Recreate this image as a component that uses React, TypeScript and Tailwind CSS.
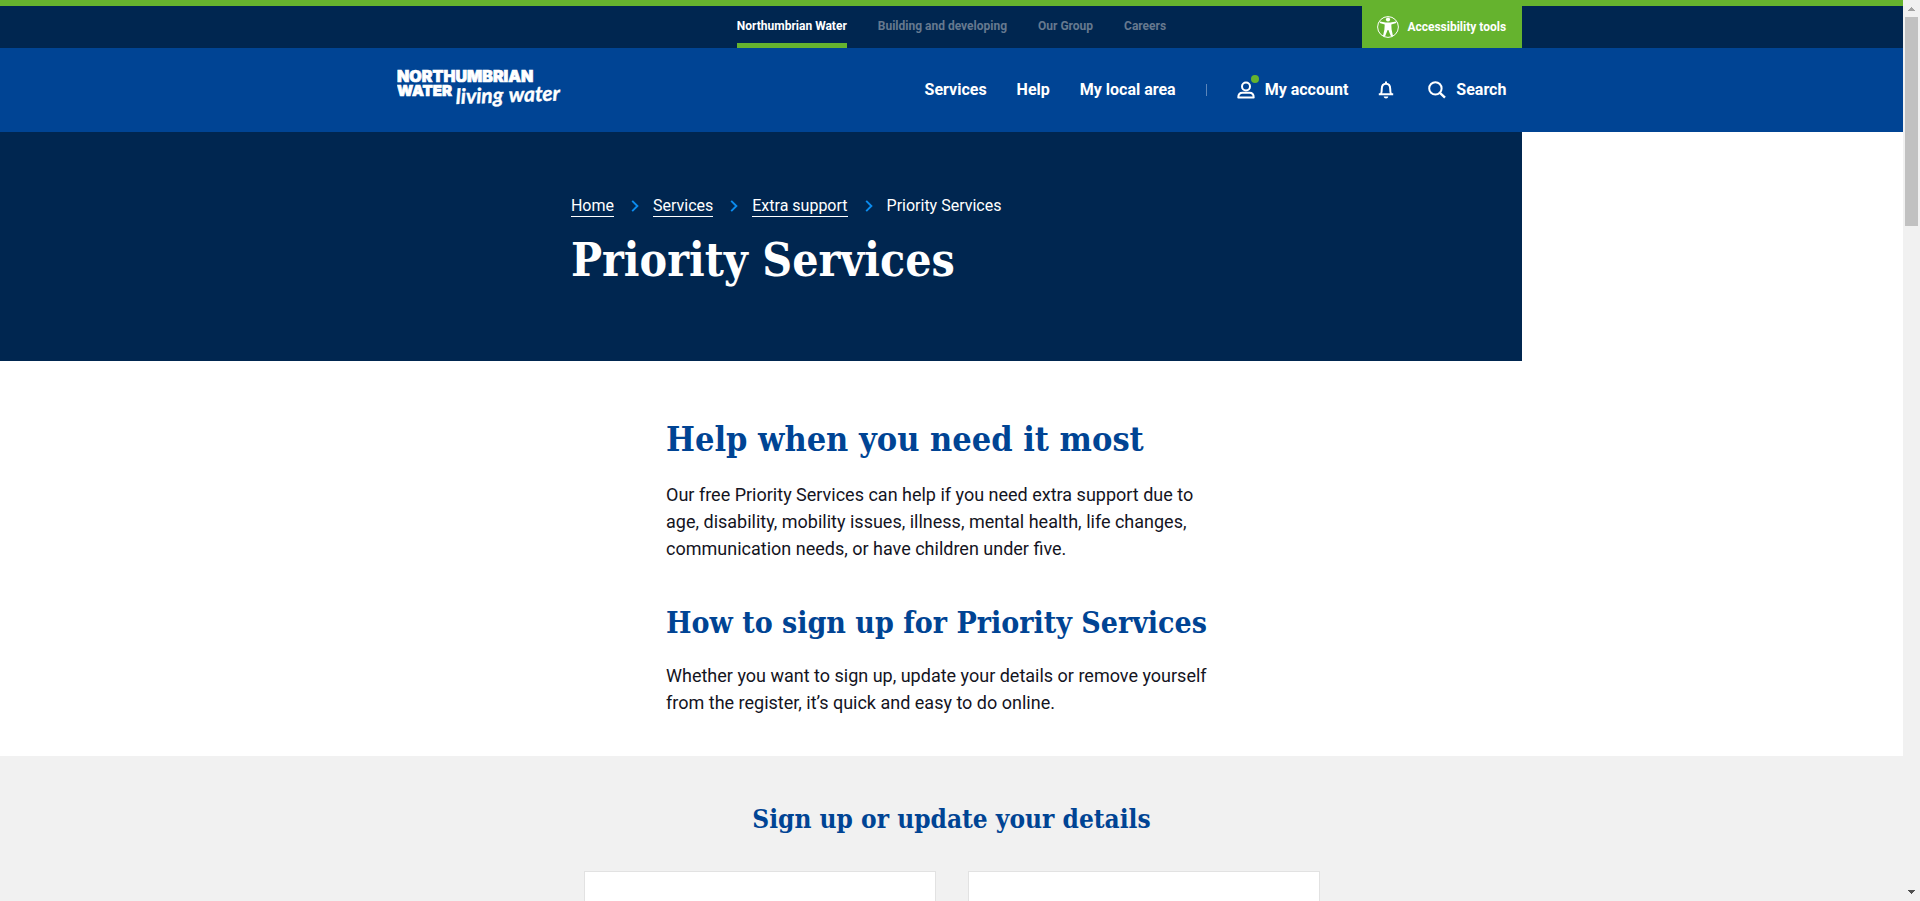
import React from "react";

const topLinks = ["Building and developing", "Our Group", "Careers"];
const mainLinks = ["Services", "Help", "My local area"];
const crumbs = ["Home", "Services", "Extra support"];

const heading = "font-['DejaVu_Serif_Condensed','DejaVu_Serif',serif] font-bold";

function Logo() {
  return (
    <svg width="168" height="52" viewBox="0 -4 168 52" fill="#fff" role="img" aria-label="Northumbrian Water living water">
      <g fontFamily="Inter, sans-serif" fontWeight="900" stroke="#fff" strokeWidth="0.7">
        <text x="0" y="14" fontSize="16">NORTHUMBRIAN</text>
        <text x="0" y="28" fontSize="15">WATER</text>
      </g>
      <g fontFamily="Lato, sans-serif" fontStyle="italic" fontWeight="700" fontSize="21" stroke="#fff" strokeWidth="0.4" transform="rotate(-2 60 36)">
        <text x="59" y="36">living</text>
        <text x="112" y="36">water</text>
      </g>
    </svg>
  );
}

function AccessIcon() {
  return (
    <svg width="22" height="22" viewBox="0 0 22 22" aria-hidden="true">
      <circle cx="11" cy="11" r="10.4" fill="none" stroke="#fff" strokeWidth="1" />
      <circle cx="11" cy="3.5" r="2.1" fill="#fff" />
      <path d="M3 5.6 8.6 6.6h4.8L19 5.6l.3 1.5-5 1.5.3 5 1.4 6.4-2 .5L11.4 14h-.8L8 20.500l-2-.5 1.400-6.400.3-5-5-1.500z" fill="#fff" />
    </svg>
  );
}

function UserIcon() {
  return (
    <svg width="18" height="18" viewBox="0 0 18 18" fill="none" stroke="#fff" strokeWidth="2" aria-hidden="true">
      <circle cx="9" cy="5.500" r="4" />
      <path d="M1.300 16.500c0-2.900 1.500-4.700 4.200-4.700h7c2.700 0 4.200 1.800 4.200 4.700z" strokeLinejoin="round" />
    </svg>
  );
}

function BellIcon() {
  return (
    <svg width="16" height="18" viewBox="0 0 16 18" fill="none" stroke="#fff" strokeWidth="2" aria-hidden="true">
      <path d="M.8 13.200h14.400M2.900 13c.8-1.200.9-2.600.9-5.200C3.800 4.600 5.300 2.700 8 2.700s4.200 1.900 4.200 5.100c0 2.600.1 4 .9 5.200" />
      <path d="M8 .6v2" />
      <path d="M5.700 15.500h4.600c-.2 1.300-1 2-2.300 2s-2.100-.7-2.300-2z" fill="#fff" stroke="none" />
    </svg>
  );
}

function SearchIcon() {
  return (
    <svg width="18" height="18" viewBox="0 0 18 18" fill="none" stroke="#fff" strokeWidth="2" aria-hidden="true">
      <circle cx="7.400" cy="7.400" r="6.200" />
      <path d="M11.900 11.900 17 16.600" strokeWidth="2.400" />
    </svg>
  );
}

function Chevron() {
  return (
    <svg className="ml-[17px] mr-[14px]" width="8" height="12" viewBox="0 0 8 12" fill="none" stroke="#0a8cf0" strokeWidth="1.900" aria-hidden="true">
      <path d="M1.200.8 6.400 6l-5.200 5.200" />
    </svg>
  );
}

function ScrollBar() {
  return (
    <div className="flex w-[17px] shrink-0 flex-col items-center justify-between bg-[#f1f1f1]" aria-hidden="true">
      <div className="flex w-full flex-col items-center">
        <svg width="17" height="17" viewBox="0 0 17 17" fill="#a3a3a3">
          <path d="M8 7h1v1h1v1h1v1h1v1H5v-1h1V9h1V8h1z" />
        </svg>
        <div className="h-[209px] w-[13px] bg-[#c1c1c1]" />
      </div>
      <svg width="17" height="17" viewBox="0 0 17 17" fill="#505050">
        <path d="M5 6h7v1h-1v1h-1v1H9v1H8V9H7V8H6V7H5z" />
      </svg>
    </div>
  );
}

export default function App() {
  return (
    <div className="flex h-screen overflow-hidden bg-white font-['Roboto','Liberation_Sans',sans-serif]">
      <div className="min-w-0 flex-1 overflow-hidden">
        <header>
          <div className="border-t-[6px] border-[#65b32e] bg-[#002650]">
            <div className="mx-auto grid h-[42px] w-3/5 grid-cols-[1fr_auto_1fr]">
              <span />
              <nav aria-label="Sites" className="flex gap-[31px] text-xs font-bold leading-8 text-[#66798f]">
                <a href="#" className="border-b-[5px] border-[#65b32e] pt-1 text-white">Northumbrian Water</a>
                {topLinks.map((t) => (
                  <a key={t} href="#" className="pt-1">{t}</a>
                ))}
              </nav>
              <button type="button" className="flex w-40 items-center gap-2 justify-self-end bg-[#65b32e] pl-[15px] text-xs font-bold text-white">
                <AccessIcon />
                Accessibility tools
              </button>
            </div>
          </div>
          <div className="bg-[#004494]">
            <div className="mx-auto flex h-[84px] w-3/5 items-center justify-between px-4">
              <a href="#"><Logo /></a>
              <nav aria-label="Main" className="flex items-center gap-[30px] text-base font-bold text-white">
                {mainLinks.map((t) => (
                  <a key={t} href="#">{t}</a>
                ))}
                <span className="h-3 w-px bg-[#5c86ba]" />
                <a href="#" className="flex items-center gap-[10px]">
                  <span className="relative">
                    <UserIcon />
                    <span className="absolute -right-1 -top-1.5 size-2 rounded-full bg-[#65b32e]" />
                  </span>
                  My account
                </a>
                <button type="button" aria-label="Notifications"><BellIcon /></button>
                <button type="button" className="ml-1 flex items-center gap-[10px]">
                  <SearchIcon />
                  Search
                </button>
              </nav>
            </div>
          </div>
        </header>

        <section className="h-[229px] w-4/5 bg-[#002650] pl-[30%] pt-[62px] text-white">
          <nav aria-label="Breadcrumb" className="flex items-center text-base leading-6">
            {crumbs.map((c) => (
              <span key={c} className="flex items-center">
                <a href="#" className="border-b border-white leading-5">{c}</a>
                <Chevron />
              </span>
            ))}
            <span>Priority Services</span>
          </nav>
          <h1 className={`${heading} mt-3 text-[46px] leading-[60px]`}>Priority Services</h1>
        </section>

        <main>
          <div className="mx-auto w-[30%] pt-[54px] text-lg leading-[27px] text-[#14141e]">
            <h2 className={`${heading} whitespace-nowrap text-[34px] leading-[48px] text-[#004494]`}>Help when you need it most</h2>
            <p className="mt-[18px]">
              Our free Priority Services can help if you need extra support due to
              <br />
              age, disability, mobility issues, illness, mental health, life changes,
              <br />
              communication needs, or have children under five.
            </p>
            <h2 className={`${heading} mt-10 whitespace-nowrap text-[30px] leading-[42px] text-[#004494]`}>How to sign up for Priority Services</h2>
            <p className="mt-[18px]">
              Whether you want to sign up, update your details or remove yourself
              <br />
              from the register, it’s quick and easy to do online.
            </p>
          </div>
          <section className="mt-10 bg-[#f1f1f1] pt-[43px]">
            <h3 className={`${heading} text-center text-[26px] leading-10 text-[#004494]`}>Sign up or update your details</h3>
            <div className="mx-auto mt-8 grid w-[736px] grid-cols-2 gap-8">
              <article className="h-80 border border-[#e2e2e2] bg-white" />
              <article className="h-80 border border-[#e2e2e2] bg-white" />
            </div>
          </section>
        </main>
      </div>
      <ScrollBar />
    </div>
  );
}
